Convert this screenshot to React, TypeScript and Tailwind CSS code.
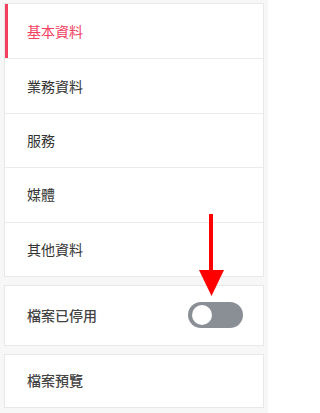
import React from "react";

const items = ["基本資料", "業務資料", "服務", "媒體", "其他資料"];

export default function App() {
  const active = 0;
  return (
    <div
      className="w-[268px] h-[413px] bg-[#f7f7f7] px-[4px] pt-[3px] overflow-hidden relative"
      style={{ fontFamily: '"Noto Sans CJK TC", "Noto Sans", sans-serif' }}
    >
      <div className="bg-white border border-[#e8e8e8]">
        {items.map((label, i) => (
          <div
            key={label}
            className={`relative h-[54.4px] flex items-center pl-[22px] text-[14px] ${
              i > 0 ? "border-t border-[#ebebeb]" : ""
            } ${i === active ? "text-[#f3405f]" : "text-[#333333]"}`}
          >
            {i === active && <div className="absolute left-0 top-0 bottom-0 w-[3px] bg-[#f3405f]" />}
            {label}
          </div>
        ))}
      </div>

      <div className="mt-[8px] h-[61px] bg-white border border-[#e8e8e8] flex items-center justify-between pl-[22px] pr-[20px]">
        <span className="text-[14px] font-medium text-[#444444]">檔案已停用</span>
        <button className="w-[55px] h-[26px] rounded-full bg-[#8a8e95] flex items-center px-[4px]">
          <span className="w-[20px] h-[20px] rounded-full bg-white" />
        </button>
      </div>

      <div className="mt-[8px] h-[54px] bg-white border border-[#e8e8e8] flex items-center pl-[22px]">
        <span className="text-[14px] font-medium text-[#444444]">檔案預覽</span>
      </div>

      <svg className="absolute left-[198px] top-[214px]" width="28" height="82" viewBox="0 0 28 82">
        <rect x="11" y="0" width="4" height="58" fill="#ff0000" />
        <polygon points="1,56 26,56 13.5,82" fill="#ff0000" />
      </svg>
    </div>
  );
}
